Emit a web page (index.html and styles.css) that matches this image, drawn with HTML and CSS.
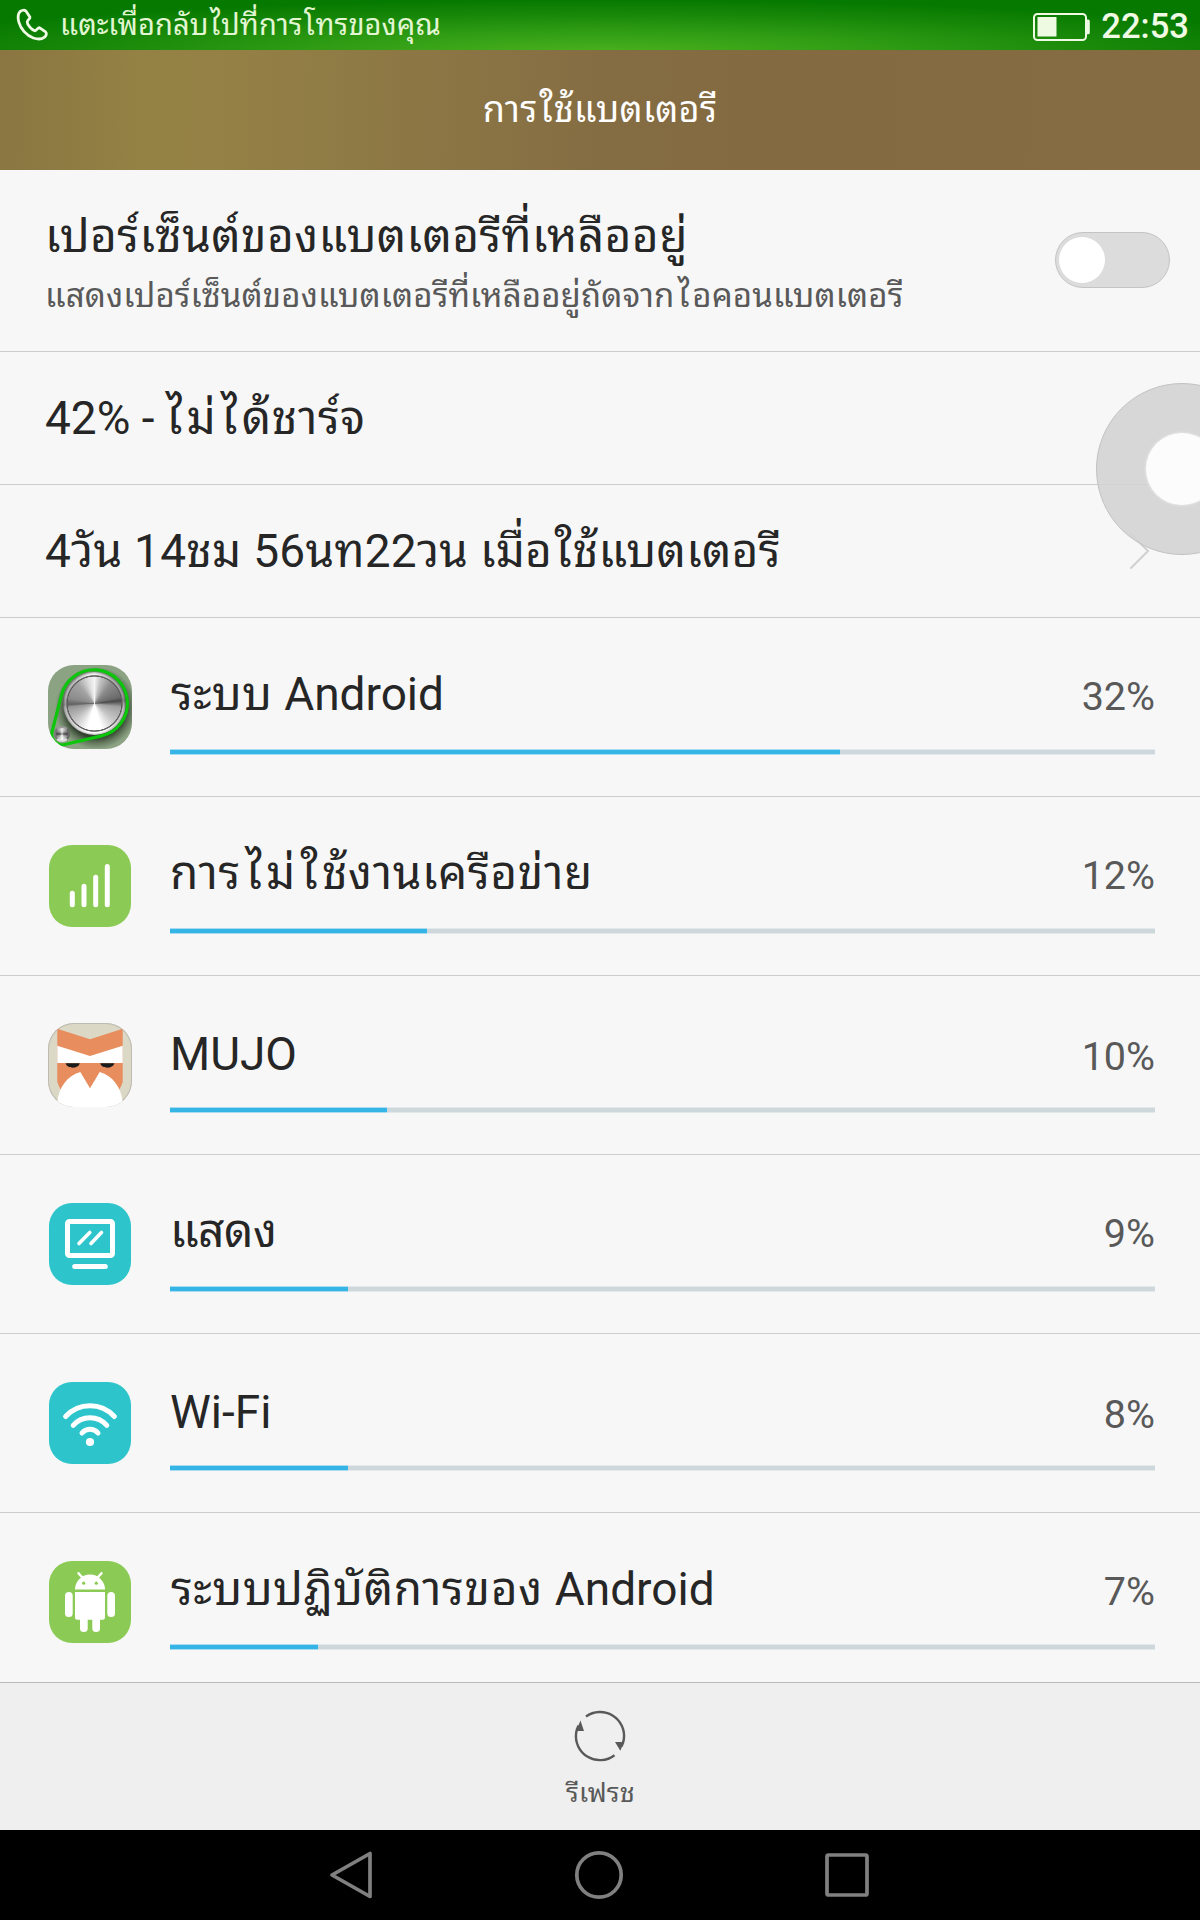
FILE: index.html
```html
<!DOCTYPE html>
<html lang="th">
<head>
<meta charset="utf-8">
<title>การใช้แบตเตอรี</title>
<link rel="stylesheet" href="styles.css">
</head>
<body>
<div class="screen">
  <div class="status">
    <svg class="phone" width="34" height="34" viewBox="15 8 34 34"><path d="M20 11.6C21.8 10 24.6 9.800 26.100 11.200L30 17.200C30.600 18.400 27.200 20 27.200 22C27.200 24.800 31.800 30 34.600 30.700C36.800 31.200 37.600 27.200 39.700 27.800L45.600 31.900C47.200 33.400 46.300 35.900 44.200 37.400C41.500 39.400 37.200 39.200 33.400 38C26.400 35.600 20.600 28.800 18.800 22C17.800 18 18 13.800 20 11.600Z"/></svg>
    <span class="call">แตะเพื่อกลับ<span class="tall">ไ</span>ปที่การ<span class="tall">โ</span>ทรของคุณ</span>
    <svg class="battery" width="58" height="28" viewBox="0 0 58 28"><rect x="1" y="1" width="52" height="26" rx="3.500" class="case"/><rect x="4.500" y="4" width="19" height="19.500" class="ink"/><path d="M54 6.500h1.200a1.600 1.600 0 0 1 1.600 1.600v11.600a1.600 1.600 0 0 1-1.600 1.600H54z" class="ink"/></svg>
    <span class="clock">22:53</span>
  </div>
  <header class="header"><h1>การ<span class="tall">ใ</span>ช้แบตเตอรี</h1></header>

  <main class="content">
    <section class="row setting">
      <div class="labels">
        <div class="title">เปอร์เซ็นต์ของแบตเตอรีที่เหลืออยู่</div>
        <div class="sub">แสดงเปอร์เซ็นต์ของแบตเตอรีที่เหลืออยู่ถัดจาก<span class="tall wide">ไ</span>อคอนแบตเตอรี</div>
      </div>
      <div class="toggle"><span class="knob"></span></div>
    </section>
    <section class="row info"><div class="title loose"><span class="latin-text">42% - </span><span class="tall wide first">ไ</span>ม่<span class="tall wide">ไ</span>ด้ชาร์จ</div></section>
    <section class="row info"><div class="title time">4วัน 14ชม 56นท22วน เมื่อ<span class="tall">ใ</span>ช้แบตเตอรี</div>
      <svg class="chevron" width="22" height="38" viewBox="0 0 22 38"><path d="M2 2L19 19L2 36"/></svg>
    </section>

    <section class="row app">
      <div class="icon system"><span class="disc big"></span><span class="disc small"></span>
        <svg width="84" height="84" viewBox="0 0 84 84"><path class="belt" d="M53.600 70.900A33.500 33.500 0 1 0 13.500 30L4.100 66.700A10.500 10.500 0 0 0 16.700 79.500Z"/></svg></div>
      <div class="usage"><div class="line"><span class="title inset">ระบบ <span class="latin-text">Android</span></span><span class="pct">32%</span></div><div class="bar"><i style="width:68%"></i></div></div>
    </section>
    <section class="row app">
      <div class="icon green"><svg width="82" height="82" viewBox="0 0 82 82"><path class="stroke w5" d="M23.300 48.200V59.800M35 41.200V59.800M46.700 32.200V59.800M58.300 21.500V59.800"/></svg></div>
      <div class="usage"><div class="line"><span class="title loose">การ<span class="tall wide">ไ</span>ม่<span class="tall wide">ใ</span>ช้งานเครือข่าย</span><span class="pct">12%</span></div><div class="bar"><i style="width:26.1%"></i></div></div>
    </section>
    <section class="row app latin">
      <div class="icon mujo"><svg width="84" height="84" viewBox="0 0 84 84">
        <path fill="#e88e5e" d="M9.300 5.700L42 16.300L74.700 5.700V59Q73.500 63 71 67L42 80L13 67Q10.500 63 9.300 59Z"/>
        <path fill="#fff" d="M9.300 22.700L42 33L74.700 22.700V40H9.300Z"/>
        <path fill="#1b1b1b" d="M17.700 40.300H31.700C30.500 46.200 19 46.200 17.700 40.300ZM52.300 40.300H66.300C65 46.200 53.500 46.200 52.300 40.300Z"/>
        <path fill="#fff" d="M9.300 84V79C11 64 19 53 32.300 49L42 65.300L51.700 49C65 53 73 64 74.700 79V84Z"/></svg></div>
      <div class="usage"><div class="line"><span class="title latin-text">MUJO</span><span class="pct">10%</span></div><div class="bar"><i style="width:22%"></i></div></div>
    </section>
    <section class="row app">
      <div class="icon teal"><svg width="82" height="82" viewBox="0 0 82 82"><rect class="stroke w5" x="18.500" y="18.500" width="45" height="34" rx="2"/><path class="stroke w4" d="M30 40.500L40.800 29.500M42 40.500L52.500 29.500"/><path class="stroke w5" d="M25.700 63.600H56.300"/></svg></div>
      <div class="usage"><div class="line"><span class="title tight">แสดง</span><span class="pct">9%</span></div><div class="bar"><i style="width:18.1%"></i></div></div>
    </section>
    <section class="row app latin">
      <div class="icon teal"><svg width="82" height="82" viewBox="0 0 82 82"><path class="stroke w5" d="M16.600 34.500A33 33 0 0 1 65.400 34.500M24.200 43.300A22.500 22.500 0 0 1 57.800 43.300M33 51A10.500 10.500 0 0 1 49 51"/><circle cx="41" cy="60" r="4.100" fill="#fff"/></svg></div>
      <div class="usage"><div class="line"><span class="title latin-text">Wi-Fi</span><span class="pct">8%</span></div><div class="bar"><i style="width:18.1%"></i></div></div>
    </section>
    <section class="row app last">
      <div class="icon green"><svg width="82" height="82" viewBox="0 0 82 82"><g fill="#fff"><path d="M26 28.500A15 15 0 0 1 56 28.500ZM26 31H56V56.200a2.500 2.500 0 0 1-2.500 2.500H28.500A2.500 2.500 0 0 1 26 56.200Z"/><rect x="16" y="31" width="7.700" height="25" rx="3.850"/><rect x="58.300" y="31" width="7.700" height="25" rx="3.850"/><rect x="31" y="50" width="7.700" height="21" rx="3.850"/><rect x="43.300" y="50" width="7.700" height="21" rx="3.850"/></g><path class="stroke w2" d="M29.500 12.200L33.500 16.800M52.500 12.200L48.500 16.800"/><circle cx="34.700" cy="22.200" r="1.600" fill="#8bcb55"/><circle cx="47.300" cy="22.200" r="1.600" fill="#8bcb55"/></svg></div>
      <div class="usage"><div class="line"><span class="title inset loose">ระบบปฏิบัติการของ <span class="latin-text">Android</span></span><span class="pct">7%</span></div><div class="bar"><i style="width:15%"></i></div></div>
    </section>
  </main>

  <footer class="actions">
    <svg width="54" height="54" viewBox="-27 -27 54 54"><path class="ring" d="M-14 -19.500A24 24 0 0 1 23.800 3.500C23.400 6.500 22.500 8.500 21.500 10.500M14.500 19.200A24 24 0 0 1 -23.800 -3.500C-23.400 -6.500 -22.500 -8.500 -21.500 -10.500"/><path fill="#595959" d="M15 6H24L20.300 14.800ZM-16 -5H-24L-19.500 -15.400Z"/></svg>
    <span class="refresh">รีเฟรช</span>
  </footer>
  <nav class="nav">
    <svg width="48" height="52" viewBox="0 0 48 52"><path d="M42 4.500V47.500L4 26Z"/></svg>
    <svg width="52" height="52" viewBox="0 0 52 52"><circle cx="25" cy="26" r="22.200"/></svg>
    <svg width="48" height="52" viewBox="0 0 48 52"><rect x="4" y="6" width="40" height="40" rx="1.500"/></svg>
  </nav>
  <div class="assist"><span></span></div>
</div>
</body>
</html>
```
FILE: styles.css
```css
* { box-sizing: border-box; }
body { margin: 0; background: #f7f7f7; font-family: Roboto, "Noto Sans Thai Looped", "Noto Sans Thai", "Noto Sans", sans-serif; }
.screen { position: relative; width: 1200px; height: 1920px; overflow: hidden; display: flex; flex-direction: column; white-space: nowrap; color: #262626; }
svg { display: block; flex: none; }

.status { height: 50px; display: flex; align-items: flex-start; padding: 0 11px 0 15px; color: #f0fae4; background: radial-gradient(ellipse 720px 52px at 50% 104%, #4ab11e 0%, #2f9c14 40%, #168608 75%, #067a00 100%); }
.phone { margin-top: 8px; fill: none; stroke: #f0fae4; stroke-width: 2.8; stroke-linejoin: round; }
.call { margin-left: 11px; flex: 1; font-size: 29px; line-height: 51px; letter-spacing: .1px; color: #e2f6d2; }
.battery { margin-top: 13px; }
.battery .case { fill: none; stroke: #eefae2; stroke-width: 2; }
.battery .ink { fill: #eefae2; }
.clock { margin-left: 10px; font-size: 34.6px; font-weight: 500; line-height: 53px; }

.header { height: 120px; display: flex; justify-content: center; background: linear-gradient(91deg, #8a7641 0, #948144 140px, #958145 220px, #8f7b45 340px, #856d43 600px, #836a41 780px, #856c42 1200px); }
h1 { margin: 0; color: #fff; font-size: 36px; font-weight: 400; line-height: 121px; letter-spacing: .3px; }

.tall { margin-left: .05em; margin-right: .02em; }
.wide { margin-left: .1em; margin-right: .08em; }
.first { margin-left: 0; }
.latin-text { letter-spacing: 0; }

.content { flex: none; height: 1512px; }
.row { display: flex; border-bottom: 1px solid #ccc; padding: 0 45px 0 45px; }
.title { display: block; font-size: 46px; line-height: 60px; letter-spacing: .4px; }
.title.latin-text { letter-spacing: 0; }
.title.loose { letter-spacing: .65px; }
.title.tight { letter-spacing: -.5px; }
.title.time { letter-spacing: .25px; }
.title.inset { padding-left: 1px; }
.setting { height: 182px; padding-top: 36px; padding-right: 30px; justify-content: space-between; }
.sub { font-size: 33px; line-height: 48px; margin-top: 6px; letter-spacing: .15px; color: #595959; }
.toggle { width: 115px; height: 56px; margin-top: 26px; padding: 4px 3px; border: 1px solid #c4c4c4; border-radius: 28px; background: #dcdcdc; }
.knob { display: block; width: 46px; height: 46px; border-radius: 50%; background: #fff; }
.info { height: 133px; padding-top: 36px; justify-content: space-between; }
.chevron { margin: 11px 4px 0 0; fill: none; stroke: #d0d0d0; stroke-width: 2; stroke-linecap: round; }

.app { height: 179px; padding-left: 49px; padding-top: 46px; gap: 39px; }
.app.last { height: 169px; border: 0; }
.icon { flex: none; width: 82px; height: 82px; margin-top: 2px; border-radius: 23px; overflow: hidden; }
.green { background: #8bcb55; }
.teal { background: #2dc5cb; }
.stroke { fill: none; stroke: #fff; stroke-linecap: round; }
.w5 { stroke-width: 5; }
.w4 { stroke-width: 3.6; }
.w2 { stroke-width: 2.4; }
.system, .mujo { position: relative; width: 84px; height: 84px; margin: 1px -1px 0; border-radius: 26px; }
.system { background: radial-gradient(circle 41px at 48px 43px, #33422f 72%, #65795f 86%, #8ba283 100%); }
.system svg { position: relative; }
.belt { fill: none; stroke: #0bc60b; stroke-width: 3.2; }
.disc { position: absolute; border-radius: 50%; }
.big { left: 14.5px; top: 6.8px; width: 63px; height: 63px; background: radial-gradient(circle, transparent 26.6px, #555 27.2px, #777 28px, transparent 28.6px), radial-gradient(circle, transparent 27px, rgba(255, 255, 255, .35) 29px, rgba(90, 90, 90, .4) 31.5px), conic-gradient(from 0deg, #f4f4f4 0deg, #c4c4c4 14deg, #8c8c8c 40deg, #6c6c6c 75deg, #4a4a4a 84deg, #a0a0a0 98deg, #c4c4c4 130deg, #fff 165deg, #fff 195deg, #c4c4c4 230deg, #969696 262deg, #626262 268deg, #8b8b8b 282deg, #a4a4a4 320deg, #ddd 345deg, #f4f4f4 360deg); }
.small { left: 6.3px; top: 61.3px; width: 16px; height: 16px; background: conic-gradient(#eee, #888 60deg, #444 90deg, #999 120deg, #fff 180deg, #999 240deg, #444 270deg, #888 300deg, #eee); border: 2px solid; border-color: #999 #666 #ddd #777; }
.mujo { background: #dcd8c6; box-shadow: 0 0 0 1px #bdbbb2 inset; }

.usage { flex: 1; }
.line { display: flex; justify-content: space-between; }
.pct { font-size: 39.5px; line-height: 66px; height: 60px; color: #595959; }
.latin .line { position: relative; top: 2px; }
.bar { height: 6px; margin-top: 25px; background: linear-gradient(#e3e8ea 1px, #ced7dc 1px 5px, #e3e8ea 5px); }
.bar i { display: block; height: 6px; background: linear-gradient(#a9dcf0 1px, #35b4e6 1px 5px, #a9dcf0 5px); }

.actions { height: 148px; padding-top: 26px; display: flex; flex-direction: column; align-items: center; background: #efefef; border-top: 1px solid #bababa; }
.ring { fill: none; stroke: #595959; stroke-width: 2.4; }
.refresh { margin-top: 8px; padding-left: 1px; font-size: 27px; line-height: 45px; letter-spacing: .2px; color: #595959; }
.nav { height: 90px; padding: 19px 329px 0 328px; display: flex; justify-content: space-between; background: #000; }
.nav svg { fill: none; stroke: #808080; stroke-width: 3.7; stroke-linejoin: round; }

.assist { position: absolute; left: 1096px; top: 383px; width: 172px; height: 172px; border: 1px solid #c2c2c2; border-radius: 50%; background: rgba(211, 211, 211, .9); }
.assist span { position: absolute; left: 49px; top: 49px; width: 72px; height: 72px; border-radius: 50%; background: #fcfcfc; box-shadow: 0 0 2px 1px #e4e4e4; }
```
